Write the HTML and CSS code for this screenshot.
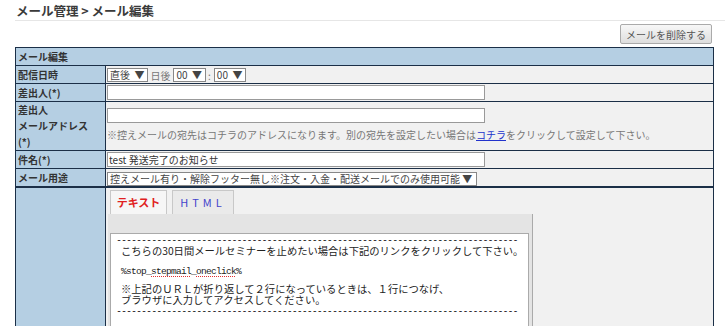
FILE: index.html
```html
<!DOCTYPE html>
<html lang="ja">

<head>
    <meta charset="UTF-8">
    <title>メール編集</title>
    <link rel="stylesheet" href="styles.css">
</head>

<body>
    <!-- 見出し -->
    <h1 class="pageTitle">メール管理 &gt; メール編集</h1>

    <div class="btnArea">
        <button class="delBtn">メールを削除する</button>
    </div>

    <!-- 編集フォーム -->
    <table class="editTable">
        <tr>
            <th colspan="2" class="head">メール編集</th>
        </tr>
        <tr>
            <th>配信日時</th>
            <td>
                <span class="sel">直後 &nbsp;▼</span><span class="txt">日後</span><span class="sel">00 &nbsp;▼</span><span class="txt">:</span><span class="sel">00 &nbsp;▼</span>
            </td>
        </tr>
        <tr>
            <th>差出人(*)</th>
            <td><input type="text" class="inp"></td>
        </tr>
        <tr>
            <th class="multi">差出人<br>メールアドレス<br>(*)</th>
            <td>
                <input type="text" class="inp">
                <p class="note">※控えメールの宛先はコチラのアドレスになります。別の宛先を設定したい場合は<a href="#">コチラ</a>をクリックして設定して下さい。</p>
            </td>
        </tr>
        <tr>
            <th>件名(*)</th>
            <td><input type="text" class="inp" value="test 発送完了のお知らせ"></td>
        </tr>
        <tr class="lastRow">
            <th>メール用途</th>
            <td><span class="sel wide">控えメール有り・解除フッター無し※注文・入金・配送メールでのみ使用可能 ▼</span></td>
        </tr>
        <tr>
            <th class="bodyHead"></th>
            <td class="bodyCell">
                <div class="tabs">
                    <span class="tab tabText">テキスト</span>
                    <span class="tab tabHtml">HTML</span>
                </div>
                <div class="panel">
                    <div class="area">
                        <div class="dash">--------------------------------------------------------------------------------</div>
                        <p class="lead">こちらの30日間メールセミナーを止めたい場合は下記のリンクをクリックして下さい。</p>
                        <p class="gap code">%stop_<span class="spell">stepmail</span>_<span class="spell">oneclick</span>%</p>
                        <p class="gap">※上記のＵＲＬが折り返して２行になっているときは、１行につなげ、</p>
                        <p>ブラウザに入力してアクセスしてください。</p>
                        <div class="dash">--------------------------------------------------------------------------------</div>
                    </div>
                </div>
            </td>
        </tr>
    </table>
</body>

</html>
```

FILE: styles.css
```css
body {
    margin: 0;
    padding: 0 0 0 15px;
    font-family: "Noto Sans CJK JP", "Noto Sans", sans-serif;
    color: #333;
    background: #fff;
    overflow: hidden;
}

.pageTitle {
    margin: 0;
    padding: 2px 0 1px 1px;
    font-size: 12.5px;
    line-height: 17px;
    font-weight: bold;
    color: #3a3a3a;
    border-bottom: 1px solid #e6e6e6;
}

.btnArea {
    width: 697px;
    display: flex;
    justify-content: flex-end;
    padding-top: 3px;
}

.delBtn {
    height: 20px;
    padding: 0 5px;
    font-family: inherit;
    font-size: 10px;
    color: #555;
    background: linear-gradient(#f7f7f7, #dedede);
    border: 1px solid #aaa;
    border-radius: 2px;
}

.editTable {
    margin-top: 3px;
    width: 699px;
    border-collapse: collapse;
    border: 1px solid #1b2f47;
    font-size: 10px;
}

.editTable th,
.editTable td {
    border: 1px solid #1b2f47;
    height: 17px;
    padding: 0 1px;
    vertical-align: middle;
}

.editTable th {
    width: 86px;
    text-align: left;
    font-weight: bold;
    color: #333;
    background: #b5cfe3;
    line-height: 13px;
    padding-left: 2px;
}

.editTable th.head {
    width: auto;
}

.editTable th.multi {
    line-height: 16px;
}

.editTable td {
    background: #f1f1f1;
}

.editTable tr.lastRow th,
.editTable tr.lastRow td {
    border-bottom: 2px solid #1b2f47;
}

.sel {
    display: inline-block;
    height: 12px;
    line-height: 12px;
    padding: 0 3px 0 2px;
    background: #fff;
    border: 1px solid #888;
    font-size: 10px;
    color: #444;
    vertical-align: middle;
}

.sel.wide {
    padding-right: 4px;
}

.txt {
    display: inline-block;
    margin: 0 3px 0 2px;
    color: #777;
    vertical-align: middle;
}

.inp {
    display: block;
    box-sizing: border-box;
    width: 378px;
    height: 15px;
    margin: 0;
    padding: 0 1px;
    border: 1px solid #999;
    font-family: inherit;
    font-size: 10px;
    color: #333;
    background: #fff;
}

.note {
    margin: 5px 0 3px;
    font-size: 10px;
    line-height: 13px;
    color: #777;
}

.note a {
    color: #2233cc;
}

.bodyHead {
    vertical-align: top;
}

.editTable td.bodyCell {
    vertical-align: top;
    padding: 2px 0 0 2px;
    height: 150px;
}

.tabs {
    display: flex;
    gap: 5px;
    padding-left: 2px;
}

.tab {
    display: inline-block;
    height: 24px;
    line-height: 22px;
    text-align: center;
    font-size: 11px;
    font-weight: bold;
    background: #eaeaea;
    border: 1px solid #c8c8c8;
    border-bottom: none;
    box-sizing: border-box;
}

.tabText {
    width: 57px;
    color: #e02020;
    background: #f6f6f6;
}

.tabHtml {
    width: 62px;
    color: #4444cc;
    letter-spacing: 4px;
    font-weight: normal;
}

.panel {
    width: 422px;
    height: 120px;
    background: #e4e4e4;
    border-right: 1px solid #aaa;
    padding: 19px 0 0 2px;
}

.area {
    width: 412px;
    height: 110px;
    background: #fff;
    border: 1px solid #aaa;
    padding: 0 0 0 5px;
    overflow: hidden;
    font-size: 10.3px;
    line-height: 11px;
    color: #222;
}

.area p {
    margin: 0;
    padding-left: 5px;
    white-space: nowrap;
}

.area p.lead {
    padding-left: 5px;
}

.area p.gap {
    margin-top: 8px;
}

.area p.code {
    margin-top: 10px;
    margin-bottom: -2px;
    font-family: "Liberation Mono", monospace;
    font-size: 9.5px;
    letter-spacing: -0.7px;
}

.spell {
    text-decoration: underline dotted #e03030;
    text-underline-offset: 2px;
}

.dash {
    white-space: nowrap;
    overflow: hidden;
    width: 409px;
    font-family: "DejaVu Sans Mono", monospace;
    font-size: 10px;
    letter-spacing: -1px;
    height: 11px;
    line-height: 11px;
}
```
